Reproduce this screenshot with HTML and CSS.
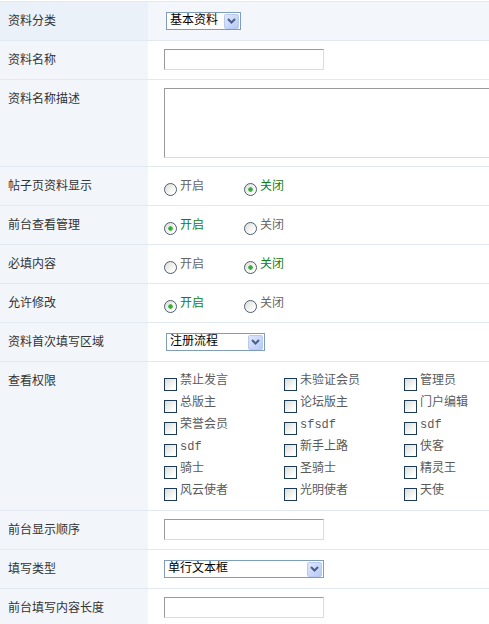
FILE: index.html
```html
<!doctype html>
<html lang="zh">
<head>
<meta charset="utf-8">
<title>资料设置</title>
<link rel="stylesheet" href="styles.css">
</head>
<body>
<div class="form">
	<div class="row hover">
		<div class="th">资料分类</div>
		<div class="td"><span class="sel w75"><span class="val">基本资料</span><i class="arr"><svg width="9" height="6" viewBox="0 0 9 6"><path d="M1 1 L4.5 4.5 L8 1" fill="none" stroke="#4a5f88" stroke-width="2"/></svg></i></span></div>
	</div>
	<div class="row">
		<div class="th">资料名称</div>
		<div class="td"><input class="txt" type="text"></div>
	</div>
	<div class="row">
		<div class="th">资料名称描述</div>
		<div class="td"><textarea class="area"></textarea></div>
	</div>
	<div class="row">
		<div class="th">帖子页资料显示</div>
		<div class="td radios">
			<label class="opt"><input type="radio" name="showinthread">开启</label>
			<label class="opt"><input type="radio" name="showinthread" checked>关闭</label>
		</div>
	</div>
	<div class="row">
		<div class="th">前台查看管理</div>
		<div class="td radios">
			<label class="opt"><input type="radio" name="viewadmin" checked>开启</label>
			<label class="opt"><input type="radio" name="viewadmin">关闭</label>
		</div>
	</div>
	<div class="row">
		<div class="th">必填内容</div>
		<div class="td radios">
			<label class="opt"><input type="radio" name="required">开启</label>
			<label class="opt"><input type="radio" name="required" checked>关闭</label>
		</div>
	</div>
	<div class="row">
		<div class="th">允许修改</div>
		<div class="td radios">
			<label class="opt"><input type="radio" name="unchangeable" checked>开启</label>
			<label class="opt"><input type="radio" name="unchangeable">关闭</label>
		</div>
	</div>
	<div class="row">
		<div class="th">资料首次填写区域</div>
		<div class="td"><span class="sel w99"><span class="val">注册流程</span><i class="arr"><svg width="9" height="6" viewBox="0 0 9 6"><path d="M1 1 L4.5 4.5 L8 1" fill="none" stroke="#4a5f88" stroke-width="2"/></svg></i></span></div>
	</div>
	<div class="row">
		<div class="th">查看权限</div>
		<div class="td">
			<div class="groups">
				<label class="chk"><input type="checkbox">禁止发言</label>
				<label class="chk"><input type="checkbox">未验证会员</label>
				<label class="chk"><input type="checkbox">管理员</label>
				<label class="chk"><input type="checkbox">总版主</label>
				<label class="chk"><input type="checkbox">论坛版主</label>
				<label class="chk"><input type="checkbox">门户编辑</label>
				<label class="chk"><input type="checkbox">荣誉会员</label>
				<label class="chk"><input type="checkbox">sfsdf</label>
				<label class="chk"><input type="checkbox">sdf</label>
				<label class="chk"><input type="checkbox">sdf</label>
				<label class="chk"><input type="checkbox">新手上路</label>
				<label class="chk"><input type="checkbox">侠客</label>
				<label class="chk"><input type="checkbox">骑士</label>
				<label class="chk"><input type="checkbox">圣骑士</label>
				<label class="chk"><input type="checkbox">精灵王</label>
				<label class="chk"><input type="checkbox">风云使者</label>
				<label class="chk"><input type="checkbox">光明使者</label>
				<label class="chk"><input type="checkbox">天使</label>
			</div>
		</div>
	</div>
	<div class="row">
		<div class="th">前台显示顺序</div>
		<div class="td"><input class="txt" type="text"></div>
	</div>
	<div class="row">
		<div class="th">填写类型</div>
		<div class="td"><span class="sel w160"><span class="val">单行文本框</span><i class="arr"><svg width="9" height="6" viewBox="0 0 9 6"><path d="M1 1 L4.5 4.5 L8 1" fill="none" stroke="#4a5f88" stroke-width="2"/></svg></i></span></div>
	</div>
	<div class="row">
		<div class="th">前台填写内容长度</div>
		<div class="td"><input class="txt" type="text"></div>
	</div>
</div>
</body>
</html>
```
FILE: styles.css
```css
html{ scrollbar-width: none }
body{ margin: 0; padding-top: 1px; overflow-x: hidden; background: #fff; color: #333; font: 12px/18px "Liberation Mono", "Noto Sans CJK SC", sans-serif }
.form{ border-top: 1px solid #e2e9f1 }
.row{ display: grid; grid-template-columns: 148px 1fr; border-bottom: 1px solid #e2e9f1 }
.th{ background: #f2f6fb; padding: 11px 8px 9px; line-height: 18px; white-space: nowrap }
.td{ padding: 8px 0 8px 16px; min-width: 0 }
.row.hover .th{ background: #ebf1f8 }
.row.hover .td{ background: #f3f7fc }

/* text fields */
.txt{ display: block; box-sizing: border-box; width: 160px; height: 21px; margin: 0; padding: 1px 3px; border: 1px solid; border-color: #9a9a9a #dcdcdc #dcdcdc #9a9a9a; background: #fff; font: inherit; outline: none }
.area{ display: block; box-sizing: border-box; width: 340px; height: 70px; margin: 0; padding: 2px; border: 1px solid; border-color: #9a9a9a #dcdcdc #dcdcdc #9a9a9a; background: #fff; font: inherit; resize: none; outline: none }

/* drop-down lists */
.sel{ display: flex; align-items: center; box-sizing: border-box; height: 18px; margin-top: 2px; border: 1px solid #7f9db9; background: #fff; color: #000 }
.sel .val{ flex: 1; padding-left: 3px; line-height: 16px; white-space: nowrap; overflow: hidden }
.sel .arr{ display: flex; align-items: center; justify-content: center; box-sizing: border-box; width: 15px; height: 15px; margin-right: 1px; border: 1px solid #b9c9ef; border-radius: 2px; background: linear-gradient(135deg, #dfe8fc, #b6c9f6) }
.w75{ width: 75px; margin-left: 2px }
.w99{ width: 99px; margin-left: 2px }
.w160{ width: 160px }

/* radios and check boxes */
.radios{ display: flex }
.opt, .chk{ display: flex; align-items: flex-start; height: 22px; line-height: 24px; color: #666; cursor: default }
.opt{ width: 80px }
.opt input, .chk input{ appearance: none; -webkit-appearance: none; flex: none; box-sizing: border-box; width: 13px; height: 13px; margin: 8px 3px 0 0; background: linear-gradient(135deg, #dcdcd6, #fff 80%) }
.opt input{ border: 1px solid #4c5c70; border-radius: 50% }
.opt input:checked{ background: radial-gradient(circle, #2f9a2f 0, #4cbb4c 2px, transparent 2.6px), linear-gradient(135deg, #dcdcd6, #fff 80%) }
.opt:has(input:checked){ color: #138013 }
.chk{ color: #5a5a5a; line-height: 22px }
.chk input{ border: 1px solid #1c3b57 }
.groups{ display: grid; grid-template-columns: repeat(3, 120px) }
```
